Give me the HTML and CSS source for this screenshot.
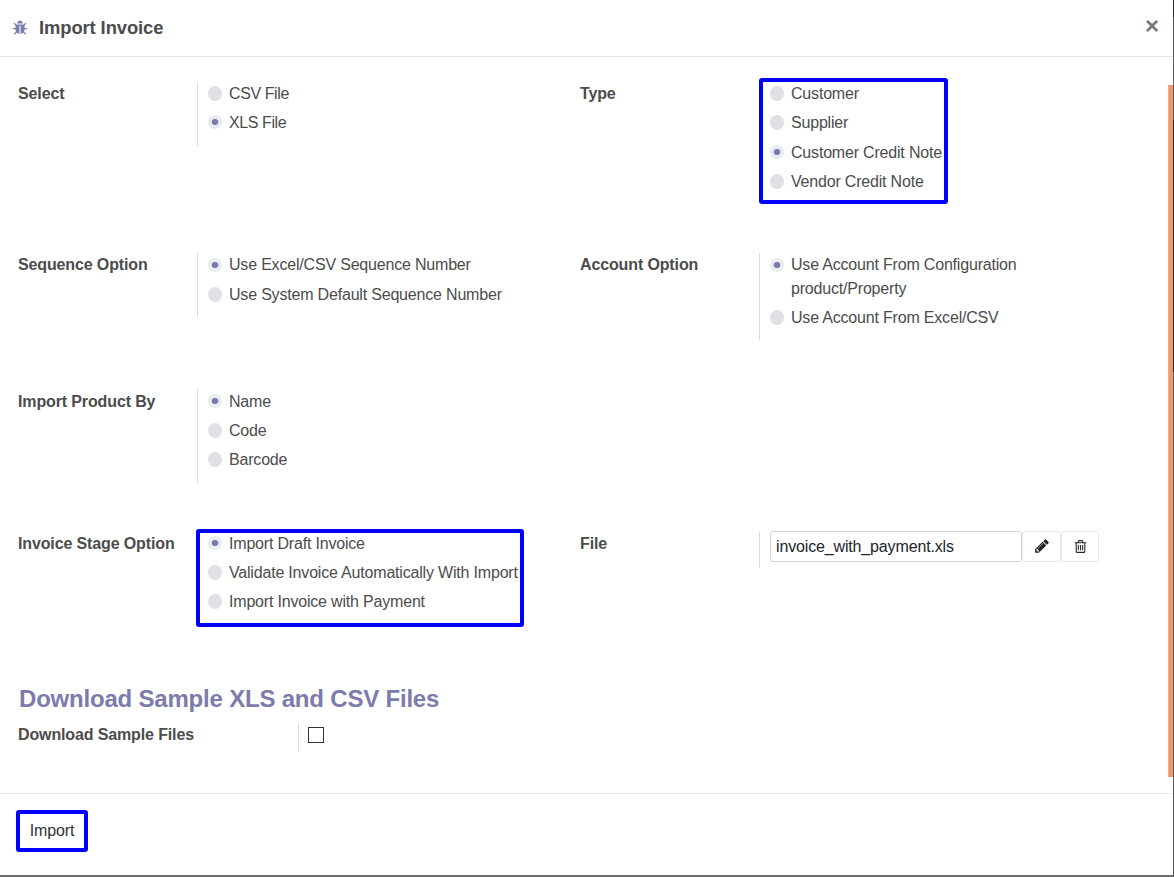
FILE: index.html
```html
<!DOCTYPE html>
<html lang="en">
<head>
<meta charset="utf-8">
<title>Import Invoice</title>
<link rel="stylesheet" href="styles.css">
</head>
<body>
<div class="backdrop">
<div class="modal">
  <header class="header">
    <svg class="bug" viewBox="0 0 1792 1792"><path d="M1696 960q0 26-19 45t-45 19h-224q0 171-67 290l208 209q19 19 19 45t-19 45q-18 19-45 19t-45-19l-198-197q-5 5-15 13t-42 28.5-65 36.5-82 29-97 13v-896h-128v896q-51 0-101.5-13.5t-87-33-66-39-43.5-32.5l-15-14-183 207q-20 21-48 21-24 0-43-16-19-18-20.5-44.5t15.5-46.5l202-227q-58-114-58-274h-224q-26 0-45-19t-19-45 19-45 45-19h224v-294l-173-173q-19-19-19-45t19-45 45-19 45 19l173 173h844l173-173q19-19 45-19t45 19 19 45-19 45l-173 173v294h224q26 0 45 19t19 45zm-480-576h-640q0-133 93.5-226.5t226.5-93.5 226.5 93.5 93.5 226.5z"/></svg>
    <h4 class="title">Import Invoice</h4>
    <button class="close">×</button>
  </header>
  <main class="body">
    <section class="row row-select">
      <div class="field"><div class="label">Select</div>
        <div class="options short">
          <div class="option"><i class="radio"></i><span>CSV File</span></div>
          <div class="option"><i class="radio checked"></i><span>XLS File</span></div>
        </div></div>
      <div class="field"><div class="label">Type</div>
        <div class="options plain">
          <div class="option"><i class="radio"></i><span>Customer</span></div>
          <div class="option"><i class="radio"></i><span>Supplier</span></div>
          <div class="option"><i class="radio checked"></i><span>Customer Credit Note</span></div>
          <div class="option"><i class="radio"></i><span>Vendor Credit Note</span></div>
          <div class="marker marker-type"></div>
        </div></div>
    </section>
    <section class="row row-sequence">
      <div class="field"><div class="label">Sequence Option</div>
        <div class="options sequence">
          <div class="option"><i class="radio checked"></i><span>Use Excel/CSV Sequence Number</span></div>
          <div class="option"><i class="radio"></i><span>Use System Default Sequence Number</span></div>
        </div></div>
      <div class="field"><div class="label">Account Option</div>
        <div class="options">
          <div class="option"><i class="radio checked"></i><span>Use Account From Configuration<br>product/Property</span></div>
          <div class="option"><i class="radio"></i><span>Use Account From Excel/CSV</span></div>
        </div></div>
    </section>
    <section class="row row-product">
      <div class="field"><div class="label">Import Product By</div>
        <div class="options">
          <div class="option"><i class="radio checked"></i><span>Name</span></div>
          <div class="option"><i class="radio"></i><span>Code</span></div>
          <div class="option"><i class="radio"></i><span>Barcode</span></div>
        </div></div>
    </section>
    <section class="row row-stage">
      <div class="field"><div class="label">Invoice Stage Option</div>
        <div class="options plain">
          <div class="option"><i class="radio checked"></i><span>Import Draft Invoice</span></div>
          <div class="option"><i class="radio"></i><span>Validate Invoice Automatically With Import</span></div>
          <div class="option"><i class="radio"></i><span>Import Invoice with Payment</span></div>
          <div class="marker marker-stage"></div>
        </div></div>
      <div class="field"><div class="label">File</div>
        <div class="file">
          <div class="filename">invoice_with_payment.xls</div>
          <button class="tool"><svg class="pencil" viewBox="0 0 1536 1792"><path d="M363 1536l91-91-235-235-91 91v107h128v128h107zm523-928q0-22-22-22-10 0-17 7l-542 542q-7 7-7 17 0 22 22 22 10 0 17-7l542-542q7-7 7-17zm-54-192l416 416-832 832h-416v-416zm683 96q0 53-37 90l-166 166-416-416 166-165q36-38 90-38 53 0 91 38l235 234q37 39 37 91z"/></svg></button>
          <button class="tool tool-trash"><svg class="trash" viewBox="0 0 1792 1792"><path d="M704 736v576q0 14-9 23t-23 9h-64q-14 0-23-9t-9-23v-576q0-14 9-23t23-9h64q14 0 23 9t9 23zm256 0v576q0 14-9 23t-23 9h-64q-14 0-23-9t-9-23v-576q0-14 9-23t23-9h64q14 0 23 9t9 23zm256 0v576q0 14-9 23t-23 9h-64q-14 0-23-9t-9-23v-576q0-14 9-23t23-9h64q14 0 23 9t9 23zm128 724v-948h-896v948q0 22 7 40.5t14.5 27 10.5 8.5h832q3 0 10.5-8.5t14.5-27 7-40.5zm-672-1076h448l-48-117q-7-9-17-11h-317q-10 2-17 11zm928 32v64q0 14-9 23t-23 9h-96v948q0 83-47 143.5t-113 60.5h-832q-66 0-113-58.5t-47-141.5v-952h-96q-14 0-23-9t-9-23v-64q0-14 9-23t23-9h309l70-167q15-37 54-63t79-26h320q40 0 79 26t54 63l70 167h309q14 0 23 9t9 23z"/></svg></button>
        </div></div>
    </section>
    <h2 class="heading">Download Sample XLS and CSV Files</h2>
    <div class="samples"><div class="label">Download Sample Files</div><div class="check-cell"><span class="checkbox"></span></div></div>
    <div class="scrollbar"></div>
  </main>
  <footer class="footer"><button class="import">Import</button></footer>
</div>
<div class="edge"></div>
</div>
</body>
</html>
```
FILE: styles.css
```css
* { box-sizing: border-box; }
body {
  margin: 0;
  font: 16px/24px "Liberation Sans", Arial, sans-serif;
  color: #4c4c4c;
}
button { font: inherit; letter-spacing: inherit; margin: 0; padding: 0; background: #fff; border: 0; }
.backdrop { display: flex; height: 877px; background: #6b6b6b; overflow: hidden; }
.modal { display: flex; flex-direction: column; width: 1173px; height: 875px; background: #fff; }
.edge {
  width: 1px;
  background: linear-gradient(#24242c 0 17px, #5c5c5c 17px 120px, #24242c 120px 372px, #5c5c5c 372px);
}

.header { display: flex; align-items: center; height: 57px; padding: 0 14px 0 12px; border-bottom: 1px solid #e5e5e5; }
.bug { width: 16px; height: 16px; fill: #7c7bad; }
.title { margin: 0 auto 0 11px; font-size: 18.4px; letter-spacing: -0.1px; line-height: 28px; font-weight: 700; }
.close { color: #777; font-size: 24px; font-weight: 700; line-height: 24px; margin-top: -4px; }

.body { position: relative; height: 736px; padding: 25px 18px 0; }
.row { display: grid; grid-template-columns: 562px 540px; align-items: start; }
.row-select { height: 171px; }
.row-sequence { height: 136px; }
.row-product { height: 142px; }
.row-stage { height: 153px; }
.field { display: grid; grid-template-columns: 179px 1fr; align-items: start; }
.label { font-weight: 700; letter-spacing: -0.13px; }
.options {
  position: relative; border-left: 1px solid #ddd; padding-left: 10px; padding-bottom: 5.5px;
  letter-spacing: -0.19px;
}
.short { letter-spacing: -0.4px; }
.plain { border-left-color: transparent; }
.option { display: flex; gap: 7px; margin-bottom: 5.3px; }
.radio {
  flex: none; width: 14px; height: 15px; margin-top: 4px; border-radius: 50%;
  background: #dee2e6;
}
.radio.checked { height: 14px; background: radial-gradient(ellipse 3.3px 3px, #7c7bad 90%, #e9ecef 110%); }
.sequence { padding-top: 0.4px; }
.row-sequence .radio.checked { margin-top: 5px; }
.row-product .label, .row-stage .label { padding-top: 1px; }
.row-product .options, .row-stage .options { padding-top: 1px; padding-bottom: 5.4px; }
.row-product .option, .row-stage .option { margin-bottom: 5.2px; }
.marker { position: absolute; border: 4px solid #00f; border-radius: 3px; }
.marker-type { left: -1px; top: -4px; width: 189px; height: 126px; }
.marker-stage { left: -2px; top: -2px; width: 328px; height: 98px; }

.file { display: flex; height: 37px; padding-left: 10px; border-left: 1px solid #ddd; }
.filename {
  width: 252px; height: 31px; padding: 0 5px; line-height: 29px; color: #212529;
  letter-spacing: -0.15px;
  border: 1px solid #ced4da; border-radius: 3px;
}
.tool {
  display: flex; align-items: center; justify-content: center;
  width: 39px; height: 31px; border: 1px solid #e6e8eb; border-radius: 3px;
}
.tool-trash { width: 38px; }
.pencil { width: 14px; height: 16px; margin-top: -1px; fill: #212529; }
.trash { width: 15px; height: 15px; fill: #212529; }

.heading { margin: 0 0 10px 1px; font-size: 24px; letter-spacing: -0.2px; line-height: 29px; color: #7c7bad; }
.samples { display: grid; grid-template-columns: 280px 1fr; }
.check-cell { height: 29px; padding: 4px 9px; border-left: 1px solid #ddd; }
.checkbox { display: block; width: 16px; height: 16px; border: 1px solid #333; }
.scrollbar { position: absolute; left: 1168px; top: 28px; width: 5px; height: 692px; background: #f5956c; border-left: 1px solid #f7a787; }

.footer { height: 82px; border-top: 1px solid #e9ecef; padding: 16px; letter-spacing: -0.1px; }
.import { width: 72px; height: 42px; border: 4px solid #00f; border-radius: 3px; color: #333; }
```
